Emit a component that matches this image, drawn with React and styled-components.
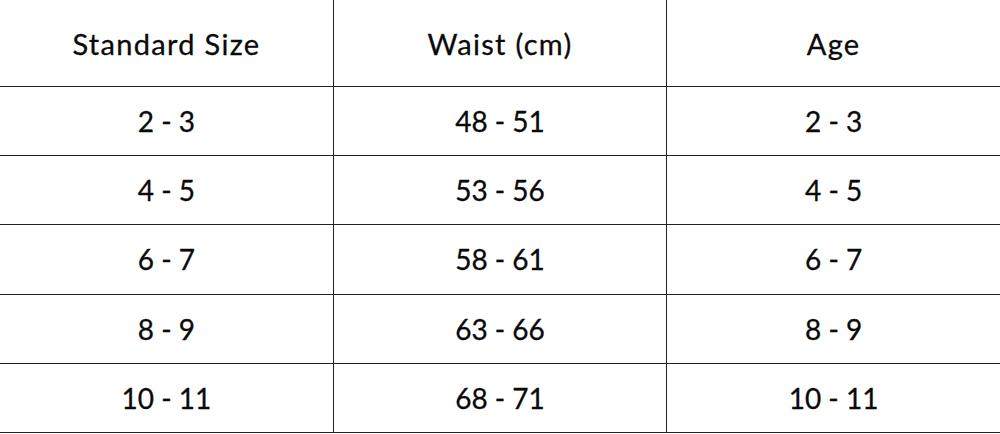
import React from 'react';
import styled, { createGlobalStyle } from 'styled-components';

const GlobalStyle = createGlobalStyle`
  html, body {
    margin: 0;
    padding: 0;
    background: #fff;
  }
  body {
    font-family: Lato, "Open Sans", sans-serif;
    color: #0a0a0a;
  }
`;

const StyledTable = styled.table`
  width: 1000px;
  border-collapse: collapse;
  table-layout: fixed;
`;

const StyledHeadCell = styled.th`
  height: 86px;
  padding: 0;
  font-weight: 400;
  font-size: 29px;
  letter-spacing: 1.3px;
  -webkit-text-stroke: 0.3px #0a0a0a;
  text-align: center;
  vertical-align: middle;
  border-bottom: 1px solid #222;
  border-left: ${(props) => (props.first ? 'none' : '1px solid #222')};
`;

const StyledCell = styled.td`
  height: 68.2px;
  padding: 0;
  font-size: 28px;
  -webkit-text-stroke: 0.3px #0a0a0a;
  text-align: center;
  vertical-align: middle;
  border-bottom: 1px solid #222;
  border-left: ${(props) => (props.first ? 'none' : '1px solid #222')};
`;

const headers = ['Standard Size', 'Waist (cm)', 'Age'];

const rows = [
  ['2 - 3', '48 - 51', '2 - 3'],
  ['4 - 5', '53 - 56', '4 - 5'],
  ['6 - 7', '58 - 61', '6 - 7'],
  ['8 - 9', '63 - 66', '8 - 9'],
  ['10 - 11', '68 - 71', '10 - 11'],
];

const App = () => (
  <>
    <GlobalStyle />
    <StyledTable>
      <thead>
        <tr>
          {headers.map((title, i) => (
            <StyledHeadCell key={title} first={i === 0}>
              {title}
            </StyledHeadCell>
          ))}
        </tr>
      </thead>
      <tbody>
        {rows.map((row) => (
          <tr key={row[0]}>
            {row.map((value, i) => (
              <StyledCell key={i} first={i === 0}>
                {value}
              </StyledCell>
            ))}
          </tr>
        ))}
      </tbody>
    </StyledTable>
  </>
);

export default App;
